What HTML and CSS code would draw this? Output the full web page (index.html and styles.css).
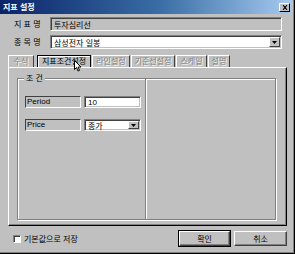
FILE: index.html
```html
<!DOCTYPE html>
<html lang="ko">
<head>
<meta charset="utf-8">
<link rel="stylesheet" href="styles.css">
</head>
<body>
<div class="window">
  <div class="titlebar">
    <span class="title">지표 설정</span>
    <span class="close"><svg width="8" height="7" viewBox="0 0 8 7"><path d="M1 0h1l2 2 2-2h1v1L5 3.5 7 6v1H6L4 5 2 7H1V6l2-2.5L1 1z" fill="#000"/></svg></span>
  </div>
  <div class="body">
    <div class="row">
      <span class="lbl">지 표 명</span>
      <div class="field disabled">투자심리선</div>
    </div>
    <div class="row">
      <span class="lbl">종 목 명</span>
      <div class="field combo">삼성전자 일봉<span class="drop"><svg width="5" height="3" viewBox="0 0 5 3"><path d="M0 0h5L2.5 3z" fill="#000"/></svg></span></div>
    </div>
    <div class="tabs">
      <span class="tab">수식</span>
      <span class="tab active">지표조건설정</span>
      <span class="tab">라인설정</span>
      <span class="tab">기준선설정</span>
      <span class="tab">스케일</span>
      <span class="tab">설명</span>
      <svg class="cursor" width="8" height="12" viewBox="0 0 8 12"><path d="M0.5 0.5v9l2-2 1.5 3.5 1.5-.6-1.5-3.4h3z" fill="#fff" stroke="#000" stroke-width="1"/></svg>
    </div>
    <div class="panel">
      <div class="group">
        <span class="legend">조 건</span>
        <div class="gleft">
          <div class="prow">
            <span class="plbl">Period</span>
            <div class="field small">10</div>
          </div>
          <div class="prow">
            <span class="plbl">Price</span>
            <div class="field small combo">종가<span class="drop"><svg width="5" height="3" viewBox="0 0 5 3"><path d="M0 0h5L2.5 3z" fill="#000"/></svg></span></div>
          </div>
        </div>
        <div class="gright"></div>
      </div>
    </div>
    <div class="footer">
      <label class="check"><span class="box"></span>기본값으로 저장</label>
      <div class="buttons">
        <span class="btn default">확인</span>
        <span class="btn">취소</span>
      </div>
    </div>
  </div>
</div>
</body>
</html>
```
FILE: styles.css
```css
html, body {
  margin: 0;
  padding: 0;
  background: #c0c0c0;
}
body {
  font-family: "Noto Sans CJK KR", "Liberation Sans", sans-serif;
  font-size: 8px;
  color: #000;
}
.window {
  width: 295px;
  height: 254px;
  box-sizing: border-box;
  background: #c0c0c0;
  border-right: 1px solid #000;
  border-bottom: 1px solid #000;
  box-shadow: inset -1px -1px #808080;
  display: flex;
  flex-direction: column;
}
.titlebar {
  height: 14px;
  margin-right: 2px;
  background: linear-gradient(to right, #0a246a, #3a6ea5 55%, #a6caf0);
  display: flex;
  align-items: center;
  justify-content: space-between;
  padding: 0 2px 0 3px;
}
.title {
  color: #fff;
  font-weight: bold;
  font-size: 8px;
  line-height: 10px;
}
.close {
  width: 11px;
  height: 9px;
  background: #c0c0c0;
  box-sizing: border-box;
  border: 1px solid;
  border-color: #fff #000 #000 #fff;
  display: flex;
  align-items: center;
  justify-content: center;
}
.close svg { width: 6px; height: 5px; }
.body {
  flex: 1;
  display: flex;
  flex-direction: column;
  padding: 3px 0 0 0;
}
.row {
  display: flex;
  align-items: center;
  height: 14px;
  margin-bottom: 4px;
}
.lbl {
  width: 36px;
  padding-left: 14px;
  line-height: 10px;
}
.field {
  box-sizing: border-box;
  height: 14px;
  width: 232px;
  background: #fff;
  border: 1px solid;
  border-color: #808080 #fff #fff #808080;
  box-shadow: inset 1px 1px #404040, inset -1px -1px #c0c0c0;
  padding: 0 3px;
  line-height: 11px;
  display: flex;
  align-items: center;
  position: relative;
}
.field.disabled {
  background: #c0c0c0;
}
.combo .drop {
  position: absolute;
  right: 1px;
  top: 1px;
  bottom: 1px;
  width: 11px;
  box-sizing: border-box;
  background: #c0c0c0;
  border: 1px solid;
  border-color: #fff #404040 #404040 #fff;
  display: flex;
  align-items: center;
  justify-content: center;
}
.tabs {
  display: flex;
  margin: 2px 0 0 8px;
  height: 12px;
  position: relative;
}
.tab {
  box-sizing: border-box;
  height: 12px;
  padding: 0 3px;
  border-top: 1px solid #fff;
  border-left: 1px solid #fff;
  border-right: 1px solid #404040;
  line-height: 10px;
  color: #808080;
  text-shadow: 1px 1px 0 #fff;
  margin-right: 1px;
}
.tab:first-child { width: 26px; text-align: center; }
.tab.active {
  color: #000;
  text-shadow: none;
  border: 1px solid #000;
  border-bottom: none;
  box-shadow: inset 1px 1px #fff;
  padding: 0 4px;
  margin-left: 2px;
}
.cursor {
  position: absolute;
  left: 66px;
  top: 5px;
}
.panel {
  box-sizing: border-box;
  width: 279px;
  height: 159px;
  margin-left: 8px;
  border: 1px solid;
  border-color: #fff #000 #000 #fff;
  box-shadow: inset -1px -1px #808080;
  padding: 10px 0 0 8px;
}
.group {
  box-sizing: border-box;
  width: 259px;
  height: 142px;
  border: 1px solid #808080;
  box-shadow: inset 1px 1px #fff, 1px 1px #fff;
  position: relative;
  display: flex;
}
.legend {
  position: absolute;
  left: 6px;
  top: -6px;
  background: #c0c0c0;
  padding: 0 2px;
  line-height: 10px;
}
.gleft {
  width: 128px;
  border-right: 1px solid #808080;
  box-shadow: 1px 0 #fff;
  padding: 17px 0 0 7px;
  box-sizing: border-box;
  display: flex;
  flex-direction: column;
  gap: 11px;
}
.gright { flex: 1; }
.prow {
  display: flex;
  align-items: center;
  gap: 3px;
}
.plbl {
  box-sizing: border-box;
  width: 56px;
  height: 12px;
  border: 1px solid;
  border-color: #404040 #fff #fff #404040;
  padding-left: 1px;
  font-family: "Liberation Sans", sans-serif;
  line-height: 10px;
}
.field.small {
  width: 57px;
  height: 12px;
  font-family: "Liberation Sans", "Noto Sans CJK KR", sans-serif;
}
.field.small.combo { font-family: "Noto Sans CJK KR", sans-serif; }
.footer {
  display: flex;
  align-items: center;
  justify-content: space-between;
  margin-top: 5px;
  padding: 0 7px 0 13px;
  height: 15px;
}
.check {
  display: flex;
  align-items: center;
  gap: 3px;
  line-height: 10px;
}
.box {
  width: 8px;
  height: 8px;
  box-sizing: border-box;
  background: #fff;
  border: 1px solid;
  border-color: #808080 #fff #fff #808080;
  box-shadow: inset 1px 1px #404040;
}
.buttons {
  display: flex;
  gap: 4px;
}
.btn {
  box-sizing: border-box;
  width: 53px;
  height: 15px;
  border: 1px solid;
  border-color: #fff #404040 #404040 #fff;
  box-shadow: inset -1px -1px #808080;
  display: flex;
  align-items: center;
  justify-content: center;
  line-height: 10px;
}
.btn.default {
  outline: 1px solid #000;
  outline-offset: 0;
  width: 51px;
}
```
